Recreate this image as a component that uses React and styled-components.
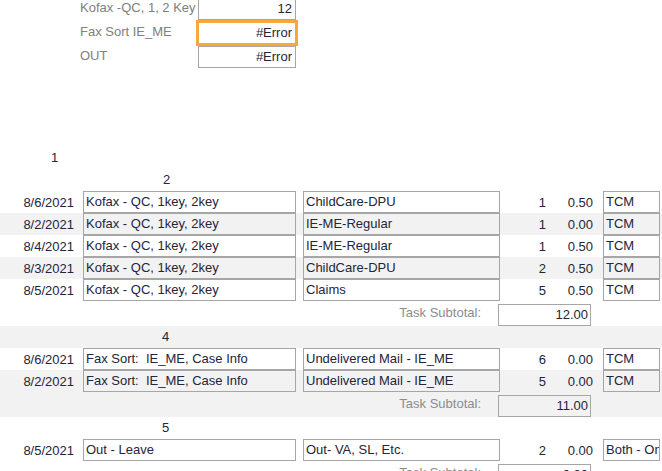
import React from 'react';
import styled, { createGlobalStyle } from 'styled-components';

const GlobalStyle = createGlobalStyle`
  html, body {
    margin: 0;
    padding: 0;
    background: #ffffff;
  }
  body {
    font-family: 'Liberation Sans', Arial, sans-serif;
    font-size: 13px;
    color: #24243a;
    overflow: hidden;
  }
`;

const Page = styled.div`
  width: 662px;
  height: 471px;
  overflow: hidden;
`;

const TopForm = styled.div`
  display: flex;
  flex-direction: column;
  gap: 2px;
  margin-top: -2px;
  padding-left: 80px;
`;

const FieldRow = styled.div`
  display: flex;
  align-items: center;
  height: 22px;
`;

const FieldLabel = styled.div`
  width: 118px;
  color: #808080;
  padding-bottom: 3px;
`;

const FieldBox = styled.div`
  box-sizing: border-box;
  width: 98px;
  height: 22px;
  border: 1px solid #a6a6a6;
  text-align: right;
  padding-right: 3px;
  line-height: 20px;
  outline: ${(p) => (p.$focused ? '3px solid #f8a73b' : 'none')};
  outline-offset: -1px;
`;

const Report = styled.div`
  margin-top: 79px;
  display: flex;
  flex-direction: column;
`;

const GroupHeader = styled.div`
  height: 22px;
  line-height: 22px;
  background: ${(p) => (p.$shade ? '#f2f2f2' : 'transparent')};
  padding-left: ${(p) => p.$indent}px;
`;

const DetailRow = styled.div`
  display: grid;
  grid-template-columns: 74px 9px 213px 7px 197px 47px 47px 9px 57px;
  height: 22px;
  align-items: center;
  background: ${(p) => (p.$shade ? '#f2f2f2' : 'transparent')};
`;

const DateCell = styled.div`
  grid-column: 1;
  text-align: right;
`;

const TextBox = styled.div`
  grid-column: ${(p) => p.$col};
  box-sizing: border-box;
  height: 22px;
  border: 1px solid #a6a6a6;
  padding-left: 2px;
  line-height: 20px;
  white-space: pre;
  overflow: hidden;
`;

const NumCell = styled.div`
  grid-column: ${(p) => p.$col};
  text-align: right;
  padding-right: 1px;
`;

const SubtotalRow = styled.div`
  display: flex;
  height: 25px;
  background: ${(p) => (p.$shade ? '#f2f2f2' : 'transparent')};
`;

const SubtotalLabel = styled.div`
  width: 481px;
  text-align: right;
  color: #8c8c8c;
  line-height: 22px;
  padding-top: 1px;
`;

const SubtotalBox = styled.div`
  box-sizing: border-box;
  margin-left: 17px;
  margin-top: 3px;
  width: 93px;
  height: 22px;
  border: 1px solid #a6a6a6;
  text-align: right;
  padding-right: 2px;
  line-height: 20px;
`;

const fields = [
  { label: 'Kofax -QC, 1, 2 Key', value: '12' },
  { label: 'Fax Sort IE_ME', value: '#Error', focused: true },
  { label: 'OUT', value: '#Error' },
];

const groups = [
  {
    headers: [
      { text: '1', indent: 51 },
      { text: '2', indent: 163 },
    ],
    rows: [
      { date: '8/6/2021', task: 'Kofax - QC, 1key, 2key', sub: 'ChildCare-DPU', count: 1, value: '0.50', who: 'TCM' },
      { date: '8/2/2021', task: 'Kofax - QC, 1key, 2key', sub: 'IE-ME-Regular', count: 1, value: '0.00', who: 'TCM', shade: true },
      { date: '8/4/2021', task: 'Kofax - QC, 1key, 2key', sub: 'IE-ME-Regular', count: 1, value: '0.50', who: 'TCM' },
      { date: '8/3/2021', task: 'Kofax - QC, 1key, 2key', sub: 'ChildCare-DPU', count: 2, value: '0.50', who: 'TCM', shade: true },
      { date: '8/5/2021', task: 'Kofax - QC, 1key, 2key', sub: 'Claims', count: 5, value: '0.50', who: 'TCM' },
    ],
    subtotal: '12.00',
  },
  {
    headers: [{ text: '4', indent: 162, shade: true }],
    rows: [
      { date: '8/6/2021', task: 'Fax Sort:  IE_ME, Case Info', sub: 'Undelivered Mail - IE_ME', count: 6, value: '0.00', who: 'TCM' },
      { date: '8/2/2021', task: 'Fax Sort:  IE_ME, Case Info', sub: 'Undelivered Mail - IE_ME', count: 5, value: '0.00', who: 'TCM', shade: true },
    ],
    subtotal: '11.00',
    subShade: true,
  },
  {
    headers: [{ text: '5', indent: 162 }],
    rows: [
      { date: '8/5/2021', task: 'Out - Leave', sub: 'Out- VA, SL, Etc.', count: 2, value: '0.00', who: 'Both - One' },
    ],
    subtotal: '0.00',
  },
];

export default function App() {
  return (
    <>
      <GlobalStyle />
      <Page>
        <TopForm>
          {fields.map((f) => (
            <FieldRow key={f.label}>
              <FieldLabel>{f.label}</FieldLabel>
              <FieldBox $focused={f.focused}>{f.value}</FieldBox>
            </FieldRow>
          ))}
        </TopForm>
        <Report>
          {groups.map((g, gi) => (
            <React.Fragment key={gi}>
              {g.headers.map((h) => (
                <GroupHeader key={h.text} $indent={h.indent} $shade={h.shade}>
                  {h.text}
                </GroupHeader>
              ))}
              {g.rows.map((r, ri) => (
                <DetailRow key={ri} $shade={r.shade}>
                  <DateCell>{r.date}</DateCell>
                  <TextBox $col={3}>{r.task}</TextBox>
                  <TextBox $col={5}>{r.sub}</TextBox>
                  <NumCell $col={6}>{r.count}</NumCell>
                  <NumCell $col={7}>{r.value}</NumCell>
                  <TextBox $col={9}>{r.who}</TextBox>
                </DetailRow>
              ))}
              <SubtotalRow $shade={g.subShade}>
                <SubtotalLabel>Task Subtotal:</SubtotalLabel>
                <SubtotalBox>{g.subtotal}</SubtotalBox>
              </SubtotalRow>
            </React.Fragment>
          ))}
        </Report>
      </Page>
    </>
  );
}
